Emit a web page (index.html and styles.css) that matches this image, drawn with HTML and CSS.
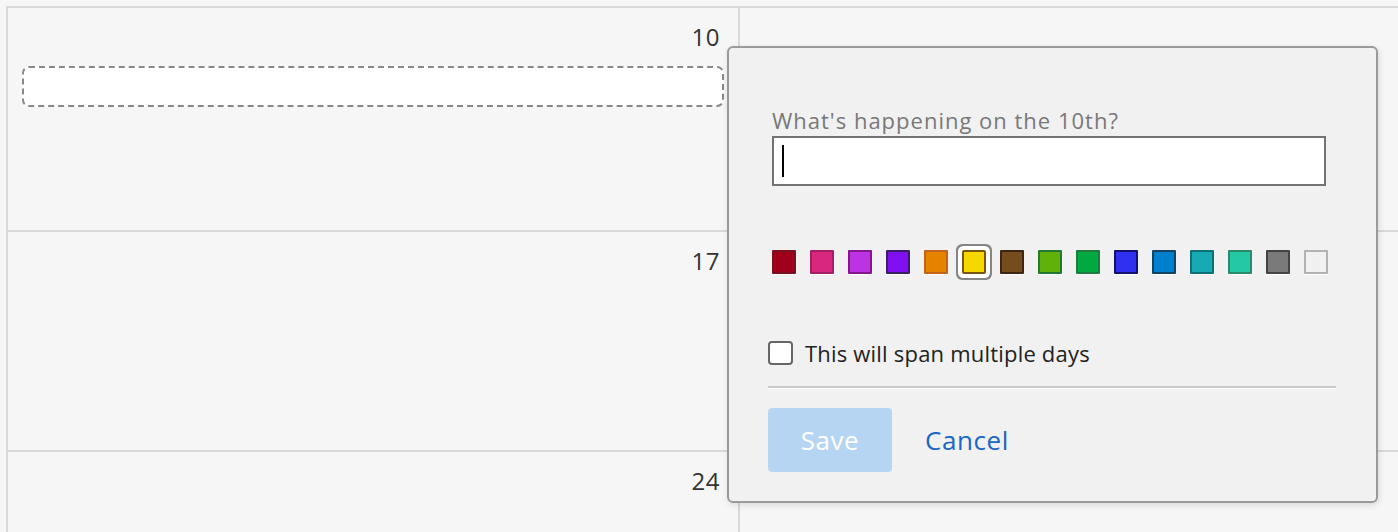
FILE: index.html
```html
<!DOCTYPE html>
<html lang="en">
<head>
<meta charset="utf-8">
<title>Calendar</title>
<link rel="stylesheet" href="styles.css">
</head>
<body>
<div class="calendar">
  <div class="cell cell-first">
    <div class="day-num">10</div>
    <div class="placeholder"></div>
  </div>
  <div class="cell cell-side cell-first"></div>
  <div class="cell">
    <div class="day-num">17</div>
  </div>
  <div class="cell cell-side"></div>
  <div class="cell">
    <div class="day-num">24</div>
  </div>
  <div class="cell cell-side"></div>
</div>

<div class="popup">
  <div class="field">
    <div class="label">What's happening on the 10th?</div>
    <div class="text-input"><span class="caret"></span></div>
    <div class="swatches">
      <span class="swatch" style="background:#a0001a;border-color:#7a1020"></span>
      <span class="swatch" style="background:#d8287e;border-color:#a41f68"></span>
      <span class="swatch" style="background:#bb33e2;border-color:#86168f"></span>
      <span class="swatch" style="background:#8010f2;border-color:#3a1f66"></span>
      <span class="swatch" style="background:#e58200;border-color:#c0641a"></span>
      <span class="swatch selected" style="background:#f5d800;border-color:#7a5410"></span>
      <span class="swatch" style="background:#744c1e;border-color:#3e2612"></span>
      <span class="swatch" style="background:#60b20a;border-color:#217a30"></span>
      <span class="swatch" style="background:#00aa40;border-color:#1f7c3e"></span>
      <span class="swatch" style="background:#3030f0;border-color:#10126e"></span>
      <span class="swatch" style="background:#0080cc;border-color:#124468"></span>
      <span class="swatch" style="background:#18aab2;border-color:#0f6f78"></span>
      <span class="swatch" style="background:#24c8a4;border-color:#2a8a6a"></span>
      <span class="swatch" style="background:#7a7a7a;border-color:#444444"></span>
      <span class="swatch" style="background:#f0f0f0;border-color:#b2b2b2"></span>
    </div>
  </div>
  <label class="check-row">
    <span class="checkbox"></span>
    <span class="check-text">This will span multiple days</span>
  </label>
  <div class="divider"></div>
  <div class="actions">
    <button class="btn-save" type="button">Save</button>
    <a class="btn-cancel" href="#">Cancel</a>
  </div>
</div>
</body>
</html>
```

FILE: styles.css
```css
* { box-sizing: border-box; }

html, body {
  margin: 0;
  padding: 0;
  height: 100%;
  overflow: hidden;
}

body {
  background: #f6f6f6;
  font-family: "Open Sans", "Liberation Sans", sans-serif;
  color: #333;
  position: relative;
}

.calendar {
  display: grid;
  grid-template-columns: 732px 1fr;
  grid-template-rows: 224px 220px 1fr;
  height: calc(100% - 6px);
  margin: 6px 0 0 6px;
}

.cell {
  border-top: 2px solid #d9d9d9;
  border-left: 2px solid #d9d9d9;
  padding: 0 14px;
  overflow: hidden;
}

.day-num {
  text-align: right;
  font-size: 24px;
  line-height: 28px;
  letter-spacing: 0.5px;
  color: #333;
  padding-top: 15px;
  padding-right: 4px;
}

.placeholder {
  margin-top: 15px;
  height: 41px;
  border: 2px dashed #888;
  border-radius: 7px;
  background: #fff;
}

.popup {
  position: absolute;
  left: 727px;
  top: 46px;
  width: 651px;
  height: 457px;
  background: #f1f1f1;
  border: 2px solid #9a9a9a;
  border-radius: 6px;
  box-shadow: 1px 2px 6px rgba(0, 0, 0, 0.12);
  padding: 58px 40px 0 39px;
  display: flex;
  flex-direction: column;
}

.field {
  padding-left: 4px;
}

.label {
  font-size: 22px;
  line-height: 28px;
  letter-spacing: 1px;
  color: #787878;
}

.text-input {
  margin-top: 2px;
  width: 554px;
  height: 50px;
  background: #fff;
  border: 2px solid #737373;
  padding: 7px 0 0 8px;
}

.caret {
  display: block;
  width: 2px;
  height: 32px;
  background: #000;
}

.swatches {
  display: flex;
  gap: 14px;
  margin-top: 64px;
}

.swatch {
  width: 24px;
  height: 24px;
  border: 2px solid;
  border-radius: 1px;
  box-shadow: 0 1px 0 #fff;
}

.swatch.selected {
  box-shadow: 0 0 0 4px #fff, 0 0 0 6px #858585;
  border-radius: 2px;
}

.check-row {
  display: flex;
  align-items: center;
  gap: 12px;
  margin-top: 67px;
  height: 24px;
}

.checkbox {
  width: 25px;
  height: 24px;
  border: 2px solid #666;
  border-radius: 4px;
  background: #fff;
}

.check-text {
  font-size: 22px;
  line-height: 28px;
  letter-spacing: 0.2px;
  color: #222;
}

.divider {
  margin-top: 21px;
  border-top: 2px solid #c8c8c8;
  border-bottom: 1px solid #fff;
}

.actions {
  display: flex;
  align-items: center;
  gap: 33px;
  margin-top: 19px;
}

.btn-save {
  width: 124px;
  height: 64px;
  border: none;
  border-radius: 4px;
  background: #b6d5f3;
  color: #fff;
  font-family: inherit;
  font-size: 26px;
  letter-spacing: 0.5px;
  padding: 0;
}

.btn-cancel {
  font-size: 26px;
  letter-spacing: 0.6px;
  color: #1a66c6;
  text-decoration: none;
}
```
